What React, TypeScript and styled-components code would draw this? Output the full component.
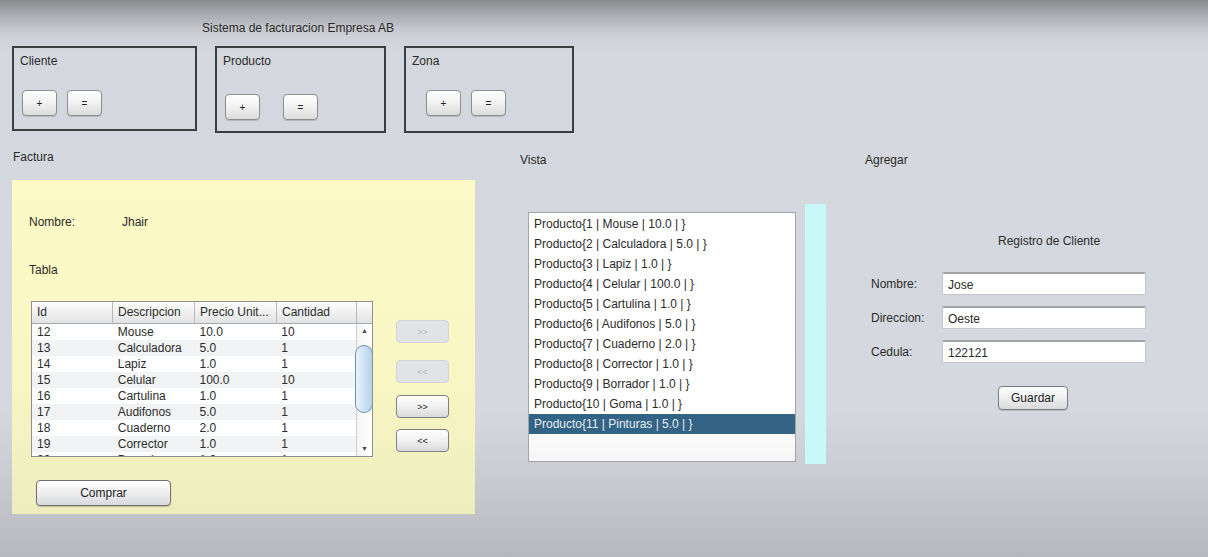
import styled, { createGlobalStyle } from "styled-components";

const GlobalStyle = createGlobalStyle`
  html, body {
    margin: 0;
    padding: 0;
  }
  body {
    font-family: "Liberation Sans", Arial, sans-serif;
    font-size: 12px;
    color: #2b2b2b;
  }
`;

interface ModuleDef {
  name: string;
  width: number;
  height: number;
  indent: number;
  gap: number;
  top: number;
}

const modules: ModuleDef[] = [
  { name: "Cliente", width: 185, height: 85, indent: 2, gap: 10, top: 22 },
  { name: "Producto", width: 171, height: 87, indent: 2, gap: 23, top: 26 },
  { name: "Zona", width: 170, height: 87, indent: 14, gap: 10, top: 22 },
];

const invoiceRows = [
  ["12", "Mouse", "10.0", "10"],
  ["13", "Calculadora", "5.0", "1"],
  ["14", "Lapiz", "1.0", "1"],
  ["15", "Celular", "100.0", "10"],
  ["16", "Cartulina", "1.0", "1"],
  ["17", "Audifonos", "5.0", "1"],
  ["18", "Cuaderno", "2.0", "1"],
  ["19", "Corrector", "1.0", "1"],
  ["20", "Borrador", "1.0", "1"],
];

const products = [
  "Producto{1 | Mouse | 10.0 | }",
  "Producto{2 | Calculadora | 5.0 | }",
  "Producto{3 | Lapiz | 1.0 | }",
  "Producto{4 | Celular | 100.0 | }",
  "Producto{5 | Cartulina | 1.0 | }",
  "Producto{6 | Audifonos | 5.0 | }",
  "Producto{7 | Cuaderno | 2.0 | }",
  "Producto{8 | Corrector | 1.0 | }",
  "Producto{9 | Borrador | 1.0 | }",
  "Producto{10 | Goma | 1.0 | }",
  "Producto{11 | Pinturas | 5.0 | }",
];

const columnWidths = [81, 82, 82, 80];

const App: React.FC = () => {
  return (
    <>
      <GlobalStyle />
      <Screen>
        <Title>Sistema de facturacion Empresa AB</Title>
        <ModuleRow>
          {modules.map((m) => (
            <ModuleBox key={m.name} $width={m.width} $height={m.height}>
              <BoxLabel>{m.name}</BoxLabel>
              <ButtonPair $indent={m.indent} $gap={m.gap} $top={m.top}>
                <SmallButton>+</SmallButton>
                <SmallButton>=</SmallButton>
              </ButtonPair>
            </ModuleBox>
          ))}
        </ModuleRow>

        <Main>
          <FacturaColumn>
            <SectionLabel>Factura</SectionLabel>
            <InvoicePanel>
              <FieldLine>
                <FieldName>Nombre:</FieldName>
                <span>Jhair</span>
              </FieldLine>
              <TablaLabel>Tabla</TablaLabel>
              <TableArea>
                <Table>
                  <HeaderRow>
                    {["Id", "Descripcion", "Precio Unit...", "Cantidad"].map(
                      (h, i) => (
                        <HeaderCell key={h} $width={columnWidths[i]}>
                          {h}
                        </HeaderCell>
                      )
                    )}
                    <HeaderCorner />
                  </HeaderRow>
                  <TableBody>
                    <Rows>
                      {invoiceRows.map((row, r) => (
                        <BodyRow key={row[0]} $striped={r % 2 === 1}>
                          {row.map((cell, i) => (
                            <BodyCell key={i} $width={columnWidths[i]}>
                              {cell}
                            </BodyCell>
                          ))}
                        </BodyRow>
                      ))}
                    </Rows>
                    <ScrollBar>
                      <ScrollArrow>▲</ScrollArrow>
                      <ScrollTrack>
                        <ScrollThumb />
                      </ScrollTrack>
                      <ScrollArrow>▼</ScrollArrow>
                    </ScrollBar>
                  </TableBody>
                </Table>
                <TransferButtons>
                  <TransferButton disabled>&gt;&gt;</TransferButton>
                  <TransferButton disabled $space={17}>
                    &lt;&lt;
                  </TransferButton>
                  <TransferButton $space={12}>&gt;&gt;</TransferButton>
                  <TransferButton $space={11}>&lt;&lt;</TransferButton>
                </TransferButtons>
              </TableArea>
              <BuyButton>Comprar</BuyButton>
            </InvoicePanel>
          </FacturaColumn>

          <VistaColumn>
            <SectionLabel $drop={3}>Vista</SectionLabel>
            <ListArea>
              <ProductList>
                {products.map((p, i) => (
                  <ProductItem key={p} $selected={i === products.length - 1}>
                    {p}
                  </ProductItem>
                ))}
              </ProductList>
              <CyanStrip />
            </ListArea>
          </VistaColumn>

          <AgregarColumn>
            <SectionLabel $drop={3}>Agregar</SectionLabel>
            <FormTitle>Registro de Cliente</FormTitle>
            <Form>
              <FormRow>
                <FormLabel>Nombre:</FormLabel>
                <TextInput>Jose</TextInput>
              </FormRow>
              <FormRow>
                <FormLabel>Direccion:</FormLabel>
                <TextInput>Oeste</TextInput>
              </FormRow>
              <FormRow>
                <FormLabel>Cedula:</FormLabel>
                <TextInput>122121</TextInput>
              </FormRow>
            </Form>
            <SaveButton>Guardar</SaveButton>
          </AgregarColumn>
        </Main>
      </Screen>
    </>
  );
};

const Screen = styled.div`
  box-sizing: border-box;
  width: 1208px;
  height: 557px;
  overflow: hidden;
  padding: 21px 0 0 12px;

  background: linear-gradient(
    180deg,
    #8a8b8f 0px,
    #9c9da1 8px,
    #b1b2b7 18px,
    #c4c6cb 28px,
    #cfd2d8 38px,
    #d4d7dd 52px,
    #d5d8de 410px,
    #cbcdd3 470px,
    #bec0c5 525px,
    #b6b8bd 557px
  );
`;

const Title = styled.div`
  margin-left: 190px;
  height: 14px;
  line-height: 14px;
  font-size: 12px;
`;

const ModuleRow = styled.div`
  display: flex;
  align-items: flex-start;
  gap: 18px;
  margin-top: 11px;
`;

interface ModuleBoxProps {
  $width: number;
  $height: number;
}

const ModuleBox = styled.div<ModuleBoxProps>`
  box-sizing: border-box;
  width: ${({ $width }) => $width}px;
  height: ${({ $height }) => $height}px;
  padding: 6px;
  border: 2px solid #3c3d40;
`;

const BoxLabel = styled.div`
  line-height: 14px;
  font-size: 12px;
`;

interface ButtonPairProps {
  $indent: number;
  $gap: number;
  $top: number;
}

const ButtonPair = styled.div<ButtonPairProps>`
  display: flex;
  gap: ${({ $gap }) => $gap}px;
  margin: ${({ $top }) => $top}px 0 0 ${({ $indent }) => $indent}px;
`;

const SmallButton = styled.button`
  box-sizing: border-box;
  width: 35px;
  height: 26px;
  padding: 0;

  font-family: inherit;
  font-size: 10px;
  color: #222;

  background: linear-gradient(180deg, #ffffff 0%, #f1f1f1 50%, #dcdcdc 100%);
  border: 1px solid #8d8e90;
  border-radius: 4px;
  box-shadow: 0 1px 1px rgba(0, 0, 0, 0.15);
`;

const Main = styled.div`
  display: flex;
  align-items: flex-start;
  margin-top: 17px;
`;

const FacturaColumn = styled.div`
  width: 463px;
`;

const SectionLabel = styled.div<{ $drop?: number }>`
  margin-top: ${({ $drop }) => $drop ?? 0}px;
  padding-left: 1px;
  line-height: 14px;
  font-size: 12px;
`;

const InvoicePanel = styled.div`
  box-sizing: border-box;
  width: 463px;
  height: 334px;
  margin-top: 16px;
  padding: 35px 17px 0;

  background: linear-gradient(180deg, #fcfac7 0%, #f8f6c2 60%, #ededbe 100%);
`;

const FieldLine = styled.div`
  display: flex;
  line-height: 14px;
`;

const FieldName = styled.span`
  width: 93px;
`;

const TablaLabel = styled.div`
  margin-top: 34px;
  line-height: 14px;
`;

const TableArea = styled.div`
  display: flex;
  align-items: flex-start;
  gap: 23px;
  margin: 24px 0 0 2px;
`;

const Table = styled.div`
  box-sizing: border-box;
  width: 342px;
  height: 156px;
  overflow: hidden;

  background: #ffffff;
  border: 1px solid #8f9093;
`;

const HeaderRow = styled.div`
  display: flex;
  height: 21px;
  border-bottom: 1px solid #a9aaad;
  background: linear-gradient(180deg, #fdfdfd 0%, #efefef 55%, #e1e2e4 100%);
`;

const HeaderCell = styled.div<{ $width: number }>`
  box-sizing: border-box;
  width: ${({ $width }) => $width}px;
  padding-left: 5px;
  line-height: 21px;
  border-right: 1px solid #b6b7ba;
  white-space: nowrap;
  overflow: hidden;
`;

const HeaderCorner = styled.div`
  flex: 1;
`;

const TableBody = styled.div`
  display: flex;
  height: 132px;
`;

const Rows = styled.div`
  width: 325px;
  overflow: hidden;
`;

const BodyRow = styled.div<{ $striped: boolean }>`
  display: flex;
  height: 16px;
  background: ${({ $striped }) => ($striped ? "#f2f3f4" : "#ffffff")};
`;

const BodyCell = styled.div<{ $width: number }>`
  box-sizing: border-box;
  width: ${({ $width }) => $width}px;
  padding-left: 5px;
  line-height: 16px;
  white-space: nowrap;
`;

const ScrollBar = styled.div`
  display: flex;
  flex-direction: column;
  width: 15px;
  background: linear-gradient(90deg, #f4f4f4, #ffffff);
  border-left: 1px solid #d0d0d0;
`;

const ScrollArrow = styled.div`
  height: 14px;
  line-height: 14px;
  text-align: center;
  font-size: 7px;
  color: #4a4a4a;
`;

const ScrollTrack = styled.div`
  flex: 1;
  padding-top: 7px;
`;

const ScrollThumb = styled.div`
  box-sizing: border-box;
  height: 68px;
  margin-left: -2px;
  width: 18px;

  background: linear-gradient(90deg, #e9f2fa 0%, #cfe1f1 50%, #b8d1e8 100%);
  border: 1px solid #6f8fae;
  border-radius: 9px;
`;

const TransferButtons = styled.div`
  display: flex;
  flex-direction: column;
  padding-top: 19px;
`;

const TransferButton = styled.button<{ $space?: number }>`
  box-sizing: border-box;
  width: 53px;
  height: 23px;
  margin-top: ${({ $space }) => $space ?? 0}px;
  padding: 0;

  font-family: inherit;
  font-size: 9px;
  color: #222;

  background: linear-gradient(180deg, #ffffff 0%, #f0f0f0 50%, #dadada 100%);
  border: 1px solid #7f8083;
  border-radius: 4px;

  &:disabled {
    color: #b4b5b8;
    background: #e2e3e6;
    border-color: #d3d4d6;
  }
`;

const BuyButton = styled.button`
  box-sizing: border-box;
  width: 135px;
  height: 26px;
  margin: 23px 0 0 7px;

  font-family: inherit;
  font-size: 12px;
  color: #222;

  background: linear-gradient(180deg, #ffffff 0%, #eeeeef 50%, #d9dadc 100%);
  border: 1px solid #6f7073;
  border-radius: 4px;
  box-shadow: 0 1px 1px rgba(0, 0, 0, 0.2);
`;

const VistaColumn = styled.div`
  margin-left: 44px;
`;

const ListArea = styled.div`
  display: flex;
  align-items: flex-start;
  gap: 9px;
  margin-top: 37px;
`;

const ProductList = styled.div`
  box-sizing: border-box;
  width: 268px;
  height: 250px;
  margin: 8px 0 0 9px;
  padding-top: 1px;

  background: linear-gradient(180deg, #ffffff 80%, #f6f6f6 100%);
  border: 1px solid #a3a4a7;
`;

const ProductItem = styled.div<{ $selected: boolean }>`
  height: 20px;
  padding-left: 5px;
  line-height: 20px;
  white-space: nowrap;

  color: ${({ $selected }) => ($selected ? "#e8eef3" : "#2b2b2b")};
  background: ${({ $selected }) => ($selected ? "#336385" : "transparent")};
`;

const CyanStrip = styled.div`
  width: 21px;
  height: 260px;
  background: #c8f9f8;
`;

const AgregarColumn = styled.div`
  margin-left: 38px;
`;

const FormTitle = styled.div`
  margin: 67px 0 0 134px;
  line-height: 14px;
`;

const Form = styled.div`
  display: flex;
  flex-direction: column;
  gap: 11px;
  margin: 24px 0 0 7px;
`;

const FormRow = styled.div`
  display: flex;
  align-items: center;
`;

const FormLabel = styled.span`
  width: 71px;
`;

const TextInput = styled.div`
  box-sizing: border-box;
  width: 204px;
  height: 23px;
  padding-left: 5px;
  line-height: 22px;

  background: #ffffff;
  border: 1px solid #c4c5c8;
  border-top: 2px solid #a2a3a6;
  border-radius: 2px;
`;

const SaveButton = styled.button`
  box-sizing: border-box;
  display: block;
  width: 70px;
  height: 24px;
  margin: 23px 0 0 134px;

  font-family: inherit;
  font-size: 12px;
  color: #222;

  background: linear-gradient(180deg, #ffffff 0%, #eeeeef 50%, #d9dadc 100%);
  border: 1px solid #7a7b7e;
  border-radius: 4px;
  box-shadow: 0 1px 1px rgba(0, 0, 0, 0.15);
`;

export default App;
